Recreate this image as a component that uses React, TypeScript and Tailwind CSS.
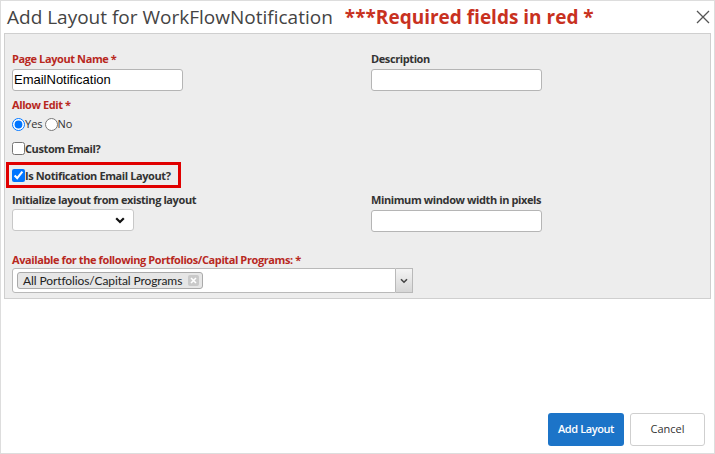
import React from "react";

const seg = { fontFamily: '"Open Sans", "Noto Sans", sans-serif' };
const lato = { fontFamily: 'Lato, "Open Sans", sans-serif' };
const arial = { fontFamily: '"Liberation Sans", Arial, sans-serif' };

function Label({ children, red }: { children: React.ReactNode; red?: boolean }) {
  return (
    <div
      className={`h-[15px] leading-[15px] text-[11px] font-bold tracking-[-0.4px] whitespace-nowrap ${red ? "text-[#b8281e]" : "text-[#333]"}`}
      style={seg}
    >
      {children}
    </div>
  );
}

function TextInput({ value }: { value?: string }) {
  return (
    <div
      className="mt-[3px] w-[171px] h-[22px] bg-white border border-[#b5b5b5] rounded-[3px] flex items-center pl-[1px] text-[13px] text-black"
      style={arial}
    >
      {value}
    </div>
  );
}

export default function App() {
  return (
    <div className="w-[715px] h-[454px] bg-white border border-[#ddd] flex flex-col">
      {/* header */}
      <div className="h-[32px] flex items-center pl-[6px] pr-[4px] relative">
        <span className="text-[19px] text-[#444] whitespace-nowrap" style={seg}>
          Add Layout for WorkFlowNotification
        </span>
        <span className="ml-[12px] text-[19px] font-bold text-[#c8311f] whitespace-nowrap" style={seg}>
          ***Required fields in red *
        </span>
        <svg className="absolute right-[4px] top-[9px]" width="14" height="14" viewBox="0 0 14 14">
          <path d="M1 1 L13 13 M13 1 L1 13" stroke="#555" strokeWidth="1.3" fill="none" />
        </svg>
      </div>

      {/* panel */}
      <div className="mx-[3px] h-[266px] bg-[#ededed] border border-[#cfcfcf] pl-[7px] pt-[17px]">
        <div className="grid grid-cols-[359px_1fr]">
          <div>
            <Label red>Page Layout Name *</Label>
            <TextInput value="EmailNotification" />
          </div>
          <div>
            <Label>Description</Label>
            <TextInput />
          </div>
        </div>

        <div className="mt-[6px]">
          <Label red>Allow Edit *</Label>
        </div>
        <div className="mt-[5px] h-[14px] flex items-center text-[11px] text-[#333]" style={seg}>
          <input type="radio" defaultChecked name="ae" className="m-0 w-[13px] h-[13px]" />
          <span>Yes</span>
          <input type="radio" name="ae" className="m-0 ml-[2px] w-[13px] h-[13px]" />
          <span>No</span>
        </div>
        <div className="mt-[10px] h-[14px] flex items-center">
          <input type="checkbox" className="m-0 w-[13px] h-[13px]" />
          <Label>Custom Email?</Label>
        </div>
        <div className="mt-[7px] -ml-[6px] w-[175px] h-[26px] border-[3px] border-[#e00000] flex items-center pl-[3px]">
          <input type="checkbox" defaultChecked className="m-0 w-[13px] h-[13px]" />
          <Label>Is Notification Email Layout?</Label>
        </div>

        <div className="mt-[4px] grid grid-cols-[359px_1fr]">
          <div>
            <Label>Initialize layout from existing layout</Label>
            <div className="mt-[2px] w-[122px] h-[22px] bg-white border border-[#c8c8c8] rounded-[3px] flex items-center justify-end pr-[8px]">
              <svg width="10" height="7" viewBox="0 0 10 7">
                <path d="M1.2 1.2 L5 5 L8.8 1.2" stroke="#111" strokeWidth="2.2" fill="none" />
              </svg>
            </div>
          </div>
          <div>
            <Label>Minimum window width in pixels</Label>
            <TextInput />
          </div>
        </div>

        <div className="mt-[20px]">
          <Label red>Available for the following Portfolios/Capital Programs: *</Label>
        </div>
        <div className="mt-[1px] w-[401px] h-[25px] flex">
          <div className="flex-1 bg-white border border-[#b9b9b9] rounded-l-[3px] flex items-center pl-[4px]">
            <div
              className="h-[17px] flex items-center bg-[#e6e6e6] border border-[#aaa] rounded-[3px] pl-[5px] pr-[3px] text-[12px] tracking-[-0.1px] text-[#222]"
              style={lato}
            >
              <span>All Portfolios/Capital Programs</span>
              <span className="ml-[6px] w-[11px] h-[11px] rounded-[2px] bg-[#c9c9c9] flex items-center justify-center">
                <svg width="7" height="7" viewBox="0 0 7 7">
                  <path d="M1 1 L6 6 M6 1 L1 6" stroke="#fff" strokeWidth="1.6" />
                </svg>
              </span>
            </div>
          </div>
          <div className="w-[17px] bg-gradient-to-b from-[#f4f4f4] to-[#d6d6d6] border border-[#b9b9b9] border-l-0 flex items-center justify-center">
            <svg width="8" height="6" viewBox="0 0 8 6">
              <path d="M1 1.2 L4 4.2 L7 1.2" stroke="#444" strokeWidth="1.6" fill="none" />
            </svg>
          </div>
        </div>
      </div>

      {/* footer */}
      <div className="flex-1 flex items-end justify-end gap-[6px] pr-[9px] pb-[7px]">
        <button
          className="w-[76px] h-[33px] rounded-[3px] bg-[#1c74c8] text-white text-[11px] font-semibold tracking-[-0.4px]"
          style={seg}
        >
          Add Layout
        </button>
        <button
          className="w-[75px] h-[33px] rounded-[3px] bg-white border border-[#cfcfcf] text-[#333] text-[11px]"
          style={seg}
        >
          Cancel
        </button>
      </div>
    </div>
  );
}
